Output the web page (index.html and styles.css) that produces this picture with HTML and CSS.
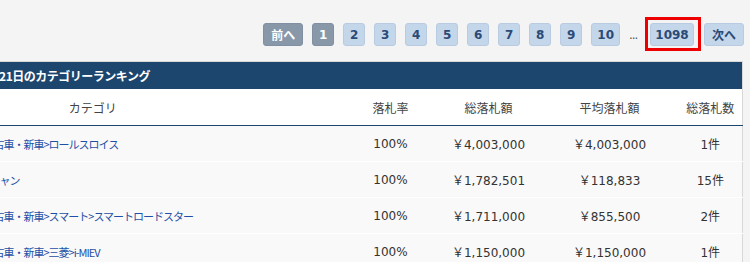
FILE: index.html
```html
<!DOCTYPE html>
<html lang="ja">
<head>
<meta charset="utf-8">
<link rel="stylesheet" href="styles.css">
</head>
<body>
<nav class="pager">
  <a class="pg pg-nav pg-off">前へ</a>
  <a class="pg pg-current">1</a>
  <a class="pg">2</a>
  <a class="pg">3</a>
  <a class="pg">4</a>
  <a class="pg">5</a>
  <a class="pg">6</a>
  <a class="pg">7</a>
  <a class="pg">8</a>
  <a class="pg">9</a>
  <a class="pg">10</a>
  <span class="dots">...</span>
  <a class="pg pg-marked">1098</a>
  <a class="pg pg-nav">次へ</a>
</nav>
<section class="ranking">
  <table class="rank-table">
    <colgroup>
      <col class="c-rank"><col class="c-cat"><col class="c-rate"><col class="c-total"><col class="c-avg"><col class="c-count">
    </colgroup>
    <thead>
      <tr class="title-row"><th colspan="6" class="title">1月21日のカテゴリーランキング</th></tr>
      <tr class="head-row">
        <th colspan="2">カテゴリ</th>
        <th>落札率</th>
        <th>総落札額</th>
        <th>平均落札額</th>
        <th>総落札数</th>
      </tr>
    </thead>
    <tbody>
      <tr>
        <td class="rank">1</td>
        <td class="cat"><a>中古車・新車&gt;ロールスロイス</a></td>
        <td>100%</td><td>￥4,003,000</td><td>￥4,003,000</td><td>1件</td>
      </tr>
      <tr>
        <td class="rank">2</td>
        <td class="cat cat-short"><a>キャン</a></td>
        <td>100%</td><td>￥1,782,501</td><td>￥118,833</td><td>15件</td>
      </tr>
      <tr>
        <td class="rank">3</td>
        <td class="cat"><a>中古車・新車&gt;スマート&gt;スマートロードスター</a></td>
        <td>100%</td><td>￥1,711,000</td><td>￥855,500</td><td>2件</td>
      </tr>
      <tr>
        <td class="rank">4</td>
        <td class="cat"><a>中古車・新車&gt;三菱&gt;i-MIEV</a></td>
        <td>100%</td><td>￥1,150,000</td><td>￥1,150,000</td><td>1件</td>
      </tr>
    </tbody>
  </table>
</section>
</body>
</html>
```
FILE: styles.css
```css
html, body {
  margin: 0;
  padding: 0;
  background: #f4f4f4;
  font-family: "DejaVu Sans", "Noto Sans CJK JP", sans-serif;
  font-size: 12px;
  color: #333;
  overflow: hidden;
}

.pager {
  display: flex;
  justify-content: flex-end;
  align-items: center;
  gap: 9px;
  padding: 23px 6px 0 0;
  height: 23px;
}

.pg {
  box-sizing: border-box;
  display: flex;
  align-items: center;
  justify-content: center;
  min-width: 22px;
  height: 23px;
  padding: 0 5px;
  border-radius: 3px;
  background: #c4d6ea;
  border: 1px solid #b8cbe0;
  color: #2b4a76;
  font-weight: bold;
  font-size: 12px;
}

.pg-nav {
  padding: 0 7px;
  font-family: "Noto Sans CJK JP", sans-serif;
  font-size: 12px;
}

.pg-off,
.pg-current {
  background: #8898a9;
  border-color: #8090a2;
  color: #fff;
}

.pg-marked {
  position: relative;
  width: 44px;
  margin-right: 1px;
}

.pg-marked::after {
  content: "";
  position: absolute;
  top: -7px;
  bottom: -6px;
  left: -6px;
  right: -8px;
  border: 3px solid #ee0000;
}

.dots {
  color: #555;
  width: 12px;
  letter-spacing: -1px;
}

.ranking {
  margin: 15px 0 0 -160px;
}

.rank-table {
  table-layout: fixed;
  width: 903px;
  border-collapse: collapse;
  border: 1px solid #d8d8d8;
  background: #f9f9f9;
}

.c-rank { width: 134px; }
.c-cat { width: 370px; }
.c-rate { width: 92px; }
.c-total { width: 104px; }
.c-avg { width: 138px; }
.c-count { width: 64px; }

.title {
  background: #1d466f;
  color: #fff;
  font-weight: bold;
  font-size: 12px;
  letter-spacing: -0.5px;
  text-align: left;
  height: 27px;
  padding: 0 0 0 140px;
  font-family: "Noto Sans CJK JP", sans-serif;
}

.head-row th {
  background: #fff;
  height: 36px;
  padding: 0;
  font-weight: normal;
  font-family: "Noto Sans CJK JP", sans-serif;
  color: #444;
  border-bottom: 1px solid #1d466f;
  text-align: center;
}

tbody td {
  height: 35px;
  padding: 0;
  text-align: center;
  border-bottom: 1px solid #ffffff;
  white-space: nowrap;
  color: #333;
}

tbody td.cat {
  text-align: left;
  padding-left: 9px;
}

tbody td.cat-short {
  padding-left: 15px;
}

.cat a {
  color: #1f4fa6;
  text-decoration: none;
  font-family: "Noto Sans CJK JP", sans-serif;
  font-size: 11px;
  letter-spacing: -1px;
}
```
